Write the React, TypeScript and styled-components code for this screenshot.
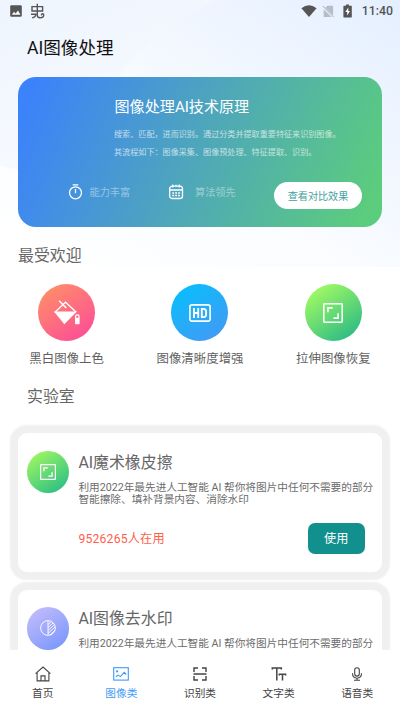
import React from "react";
import styled, { createGlobalStyle } from "styled-components";

const GlobalStyle = createGlobalStyle`
  * { box-sizing: border-box; }
  body { margin: 0; background: #fff; overflow: hidden; }
  button { font: inherit; border: 0; padding: 0; }
  svg { display: block; flex: none; }
`;

const Screen = styled.div`
  position: relative;
  width: 400px;
  height: 711px;
  overflow: hidden;
  display: flex;
  flex-direction: column;
  font-family: Roboto, "Noto Sans CJK SC", sans-serif;
  color: #666;
  white-space: nowrap;
`;

const Backdrop = styled.svg`
  position: absolute;
  inset: 0 0 auto 0;
`;

const StatusBar = styled.header`
  position: relative;
  height: 22px;
  flex: none;
  display: flex;
  justify-content: space-between;
  padding: 0 7px 0 10px;
  color: #555;
`;

const StatusGroup = styled.div<{ $gap: number }>`
  display: flex;
  align-items: center;
  gap: ${(p) => p.$gap}px;
`;

const Clock = styled.span`
  font-size: 12.3px;
  line-height: 23px;
  font-weight: 500;
  margin-left: 1px;
`;

const PageTitle = styled.h1`
  position: relative;
  margin: 0;
  padding-left: 27px;
  height: 54.5px;
  flex: none;
  font-size: 17.6px;
  line-height: 52px;
  font-weight: 400;
  color: #111;
`;

const Hero = styled.section`
  position: relative;
  flex: none;
  display: flex;
  flex-direction: column;
  height: 150px;
  margin: 0 18px;
  padding: 20px 20px 0 50px;
  border-radius: 18px;
  color: #fff;
  background: linear-gradient(113deg, #3b82fb 4%, #4da3c0 45%, #5ccd7c 96%);
`;

const HeroTitle = styled.h2`
  margin: 0 0 8px 46.5px;
  font-size: 15.1px;
  line-height: 20px;
  font-weight: 400;
`;

const HeroText = styled.p`
  margin: 0 0 0 46px;
  font-size: 8.1px;
  line-height: 18.5px;
  opacity: 0.66;
`;

const HeroFooter = styled.div`
  display: flex;
  height: 28px;
  margin-top: 20px;
`;

const Feature = styled.div<{ $width: number; $gap: number }>`
  display: flex;
  width: ${(p) => p.$width}px;
  height: 20px;
  align-items: center;
  gap: ${(p) => p.$gap}px;
  font-size: 10.2px;
`;

const FeatureLabel = styled.span`
  opacity: 0.42;
`;

const CompareButton = styled.button`
  width: 88px;
  height: 27.5px;
  margin: 0 0 0 auto;
  border-radius: 14px;
  background: #fff;
  color: #439fa0;
  && { font-size: 10.1px; padding-top: 1px; }
`;

const SectionTitle = styled.h2<{ $indent: number; $height: number; $line: number }>`
  position: relative;
  margin: 0;
  flex: none;
  padding-left: ${(p) => p.$indent}px;
  height: ${(p) => p.$height}px;
  font-size: 15.9px;
  line-height: ${(p) => p.$line}px;
  font-weight: 400;
`;

const Popular = styled.div`
  position: relative;
  flex: none;
  height: 84.5px;
  display: grid;
  grid-template-columns: repeat(3, 1fr);
`;

const Tool = styled.div`
  display: flex;
  flex-direction: column;
  align-items: center;
  gap: 8px;
  font-size: 12.45px;
  line-height: 20px;
  color: #5f5f5f;
`;

const Disc = styled.div<{ $size: number; $from: string; $to: string }>`
  flex: none;
  display: grid;
  place-items: center;
  width: ${(p) => p.$size}px;
  height: ${(p) => p.$size}px;
  border-radius: 50%;
  background: linear-gradient(145deg, ${(p) => p.$from} 14%, ${(p) => p.$to} 88%);
`;

const CardList = styled.main`
  flex: 1;
  min-height: 0;
  overflow: hidden;
  display: flex;
  flex-direction: column;
  gap: 18px;
  padding: 9px 18px 0;
`;

const Card = styled.article`
  flex: none;
  height: 138.5px;
  display: flex;
  gap: 9px;
  padding: 17.5px 9px 0 8.8px;
  border-radius: 9px;
  background: #fff;
  box-shadow: 0 0 2px 7.5px #f0f0f0;
`;

const CardBody = styled.div`
  flex: 1;
  display: flex;
  flex-direction: column;
`;

const CardTitle = styled.h3`
  margin: 0;
  font-size: 15.9px;
  line-height: 24px;
  font-weight: 400;
`;

const CardText = styled.p`
  margin: 7px 0 0;
  height: 25px;
  font-size: 10.66px;
  line-height: 12.5px;
  color: #6c6c6c;
`;

const CardFooter = styled.div`
  display: flex;
  justify-content: space-between;
  align-items: center;
  margin: 16px 8.5px 0 0;
`;

const Usage = styled.span`
  margin-bottom: 1px;
  font-size: 12.2px;
  letter-spacing: 0.2px;
  color: #ff604b;
`;

const UseButton = styled.button`
  width: 57px;
  height: 31.5px;
  border-radius: 7px;
  background: #12908e;
  color: #fff;
  && { font-size: 12.2px; }
`;

const NavBar = styled.nav`
  flex: none;
  height: 61px;
  display: grid;
  grid-template-columns: repeat(5, 1fr);
  padding: 16px 3.5px 0;
  background: #fff;
`;

const NavItem = styled.div<{ $active?: boolean }>`
  display: flex;
  flex-direction: column;
  align-items: center;
  gap: 3px;
  font-size: 10.7px;
  line-height: 18px;
  color: ${(p) => (p.$active ? "#3f9bf5" : "#444")};
`;

const line = { fill: "none", stroke: "currentColor" } as const;

const StretchIcon = ({ size }: { size: number }) => (
  <svg width={size} height={size} viewBox="0 0 20 20" fill="none" stroke="#fff" strokeWidth="1.5">
    <rect x=".8" y=".8" width="18.4" height="18.4" rx=".6" />
    <path d="M4.9 9.2V4.9h4.8M15.1 10.2v4.9h-4.7" strokeWidth="1.7" />
  </svg>
);

const BucketIcon = () => (
  <svg width="28" height="26" viewBox="0 0 28 26" fill="none" stroke="#fff" strokeWidth="1.2">
    <path d="M1.7 12.5 12.5 2.2 23.3 12.3" />
    <path d="M1 11.6h22.8L11.3 24.2Z" fill="#fff" stroke="none" />
    <path d="M6.2.8 13.3 8" strokeWidth="1.5" />
    <path d="M22.6 18.3v-2q0-1.4 1.3-1.4h.8q1.3 0 1.3 1.4v2" />
    <rect x="22" y="17.8" width="4.6" height="6.4" rx=".8" fill="#fff" stroke="none" />
  </svg>
);

const HdIcon = () => (
  <svg width="22" height="18" viewBox="0 0 22 18" fill="none" stroke="#fff" strokeWidth="1.6">
    <rect x=".9" y=".9" width="20.2" height="16.2" rx="2" />
    <path d="M5 4v10M9.2 4v10M5 9h4.2M12.8 4.9v8.2h1.7q2.6 0 2.6-2.6V7.5q0-2.6-2.6-2.6Z" strokeWidth="1.9" />
  </svg>
);

const HatchIcon = () => (
  <svg width="16" height="16" viewBox="0 0 16 16" fill="none" stroke="#fff" strokeWidth=".9">
    <circle cx="8" cy="8" r="7.4" />
    <path d="M8 .7v14.6M8 4.8l3-3M8 7.7l5-4.7M8 10.6l6.6-6M8 13.5l7.2-6.6M10 14.9l4.6-4.2" />
  </svg>
);

const tools = [
  { label: "黑白图像上色", from: "#ff8a6b", to: "#fc5095", icon: <BucketIcon /> },
  { label: "图像清晰度增强", from: "#0bbcfc", to: "#419bf5", icon: <HdIcon /> },
  { label: "拉伸图像恢复", from: "#9df864", to: "#2fbc84", icon: <StretchIcon size={20} /> },
];

const cards = [
  { title: "AI魔术橡皮擦", from: "#98f364", to: "#2fc084", icon: <StretchIcon size={16} /> },
  { title: "AI图像去水印", from: "#bdb9fb", to: "#7d98fc", icon: <HatchIcon /> },
];

const nav = [
  {
    label: "首页",
    icon: (
      <svg width="16" height="16" viewBox="0 0 16 16" {...line} strokeWidth="1.1">
        <path d="M.6 7.6 8 1l7.4 6.6M2.1 6.5v8.4h11.8V6.5M6 14.8V9.9h4v4.9" />
      </svg>
    ),
  },
  {
    label: "图像类",
    active: true,
    icon: (
      <svg width="16" height="16" viewBox="0 0 16 16" {...line} strokeWidth="1.1">
        <rect x=".7" y="1.7" width="14.6" height="12.4" />
        <path d="m2.8 10.8 2.3-1.7 2.3 1.5 3.8-4.2 2.1 2.1" />
        <circle cx="4.1" cy="5.4" r=".6" />
      </svg>
    ),
  },
  {
    label: "识别类",
    icon: (
      <svg width="16" height="16" viewBox="0 0 16 16" {...line} strokeWidth="1.4">
        <path d="M6 2H2v4M10 2h4v4M6 14H2v-4M10 14h4v-4M1.5 8h13" />
      </svg>
    ),
  },
  {
    label: "文字类",
    icon: (
      <svg width="16" height="16" viewBox="0 0 16 16" {...line} strokeWidth="1.5">
        <path d="M1.3 3.6V2h9v1.6M5.8 2v12.5M8.3 9.6V8.2h6.3v1.4M11.5 8.2v6.3" />
      </svg>
    ),
  },
  {
    label: "语音类",
    icon: (
      <svg width="16" height="16" viewBox="0 0 16 16" {...line} strokeWidth="1.1">
        <rect x="5.7" y="1.7" width="4.6" height="8.4" rx="2.3" />
        <path d="M3.5 7.3q0 4.9 4.5 4.9t4.5-4.9M8 12.2v2M5 14.3h6" />
      </svg>
    ),
  },
];

export default function App() {
  return (
    <Screen>
      <GlobalStyle />
      <Backdrop width="400" height="267" viewBox="0 0 400 267">
        <defs>
          <linearGradient id="sky" x1="0" y1="1" x2="1" y2="0">
            <stop offset="0" stopColor="#fff" />
            <stop offset=".45" stopColor="#fafcff" />
            <stop offset="1" stopColor="#e4efff" />
          </linearGradient>
          <linearGradient id="haze" x1="0" y1="0" x2=".5" y2="1">
            <stop offset="0" stopColor="#eef5fe" />
            <stop offset="1" stopColor="#f8faff" />
          </linearGradient>
        </defs>
        <rect width="400" height="267" fill="url(#sky)" />
        <path d="M0 0H218Q151 29 119 76L18 170 0 165Z" fill="url(#haze)" />
      </Backdrop>
      <StatusBar>
        <StatusGroup $gap={8}>
          <svg width="12" height="12" viewBox="0 0 12 12">
            <rect x=".2" y=".2" width="11.6" height="11.6" rx="1.2" fill="#555" />
            <path d="m1.8 9.7 2.2-3 1.6 1.8L8 5.5l2.5 4.2Z" fill="#f5f8ff" />
          </svg>
          <svg width="15" height="16" viewBox="0 0 15 16" {...line} strokeWidth="1.4">
            <path d="M2 8V3.6h10.6V8ZM7.3.8v9.4M1 11.2h4.8q0 3-3.6 3.6M7.3 10v2.3q0 2.4 2.6 2.4 3.8 0 3.8-2.8 0-1.2-1-1.2-1.4 0-1.2 1.6" />
          </svg>
        </StatusGroup>
        <StatusGroup $gap={5}>
          <svg width="16" height="12" viewBox="0 0 16 12">
            <path d="M.4 3.2Q8-2.5 15.6 3.2L8 12Z" fill="#555" />
          </svg>
          <svg width="13" height="13" viewBox="0 0 13 13">
            <path d="M5.3.8h5.8v9.5L3.4 2.7Z M1.7 4.2V12h7.8Z" fill="#b5bdc6" />
            <path d="m.8 1 10.9 11.2" stroke="#a4adb5" />
          </svg>
          <svg width="16" height="14" viewBox="0 0 16 14">
            <path d="M6 1.7V.4h3v1.3h2.3q.5 0 .5.5v10.6q0 .6-.5.6H4q-.6 0-.6-.6V2.2q0-.5.6-.5Z" fill="#555" />
            <path d="M8.3 3.6 5.3 8.1h1.9v3.3L10 6.9H8.3Z" fill="#fff" />
          </svg>
          <Clock>11:40</Clock>
        </StatusGroup>
      </StatusBar>
      <PageTitle>AI图像处理</PageTitle>
      <Hero>
        <HeroTitle>图像处理AI技术原理</HeroTitle>
        <HeroText>搜索、匹配，进而识别。通过分类并提取重要特征来识别图像。</HeroText>
        <HeroText>其流程如下：图像采集、图像预处理、特征提取、识别。</HeroText>
        <HeroFooter>
          <Feature $width={99.5} $gap={6.5}>
            <svg width="15" height="16" viewBox="0 0 15 16" {...line} strokeWidth="1.3">
              <circle cx="7.5" cy="8.8" r="6" />
              <path d="M4.7.9h5.6M7.5 5v4.2" />
            </svg>
            <FeatureLabel>能力丰富</FeatureLabel>
          </Feature>
          <Feature $width={80} $gap={11.5}>
            <svg width="16" height="16" viewBox="0 0 16 16" {...line} strokeWidth="1.3">
              <rect x="1.7" y="2.2" width="12.8" height="12.3" rx="2.6" />
              <path d="M1.7 6h12.8M4.8.5v3M11.2.5v3M8 .8v1.8" />
              <path d="M4.3 9h7.8M4.3 11.5h7.8" strokeDasharray="1.8 1.1" />
            </svg>
            <FeatureLabel>算法领先</FeatureLabel>
          </Feature>
          <CompareButton>查看对比效果</CompareButton>
        </HeroFooter>
      </Hero>
      <SectionTitle $indent={18} $height={57.5} $line={58}>最受欢迎</SectionTitle>
      <Popular>
        {tools.map((t) => (
          <Tool key={t.label}>
            <Disc $size={57} $from={t.from} $to={t.to}>{t.icon}</Disc>
            {t.label}
          </Tool>
        ))}
      </Popular>
      <SectionTitle $indent={27} $height={55.5} $line={56}>实验室</SectionTitle>
      <CardList>
        {cards.map((c) => (
          <Card key={c.title}>
            <Disc $size={42.6} $from={c.from} $to={c.to}>{c.icon}</Disc>
            <CardBody>
              <CardTitle>{c.title}</CardTitle>
              <CardText>
                利用2022年最先进人工智能 AI 帮你将图片中任何不需要的部分
                <br />
                智能擦除、填补背景内容、消除水印
              </CardText>
              <CardFooter>
                <Usage>9526265人在用</Usage>
                <UseButton>使用</UseButton>
              </CardFooter>
            </CardBody>
          </Card>
        ))}
      </CardList>
      <NavBar>
        {nav.map((n) => (
          <NavItem key={n.label} $active={n.active}>
            {n.icon}
            {n.label}
          </NavItem>
        ))}
      </NavBar>
    </Screen>
  );
}
